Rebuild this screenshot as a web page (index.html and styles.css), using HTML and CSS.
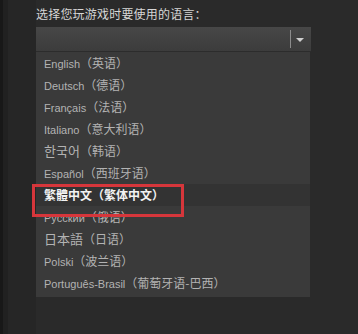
FILE: index.html
```html
<!DOCTYPE html>
<html lang="zh">
<head>
<meta charset="utf-8">
<link rel="stylesheet" href="styles.css">
</head>
<body>
<div class="page">
  <div class="label">选择您玩游戏时要使用的语言：</div>
  <div class="select">
    <div class="select-value"></div>
    <div class="select-divider"></div>
    <div class="select-arrow"></div>
  </div>
  <ul class="list">
    <li class="item">English<span class="cj">（英语）</span></li>
    <li class="item">Deutsch<span class="cj">（德语）</span></li>
    <li class="item">Français<span class="cj">（法语）</span></li>
    <li class="item">Italiano<span class="cj">（意大利语）</span></li>
    <li class="item"><span class="ko">한국어</span><span class="cj">（韩语）</span></li>
    <li class="item">Español<span class="cj">（西班牙语）</span></li>
    <li class="item item-active"><span class="cj">繁體中文（繁体中文）</span></li>
    <li class="item">Русский<span class="cj">（俄语）</span></li>
    <li class="item"><span class="ja">日本語</span><span class="cj">（日语）</span></li>
    <li class="item">Polski<span class="cj">（波兰语）</span></li>
    <li class="item">Português-Brasil<span class="cj">（葡萄牙语-巴西）</span></li>
  </ul>
  <div class="highlight-box"></div>
</div>
</body>
</html>
```
FILE: styles.css
```css
html, body {
  margin: 0;
  padding: 0;
}
body {
  width: 358px;
  height: 334px;
  overflow: hidden;
  background: linear-gradient(to right, #181818 0, #181818 3px, #212121 3px, #212121 8px, #262626 8px, #262626 36px, #2a2a2a 36px);
  font-family: "Liberation Sans", "Noto Sans CJK SC", sans-serif;
}
.page {
  position: relative;
  padding: 5px 0 0 36px;
}
.label {
  font-family: "Noto Sans CJK SC", sans-serif;
  font-size: 12px;
  line-height: 18px;
  color: #d6d6d6;
  letter-spacing: 0.2px;
  margin-bottom: 4px;
  height: 18px;
}
.select {
  width: 275px;
  height: 24px;
  display: flex;
  align-items: center;
  background: linear-gradient(to bottom, #474747, #3c3c3c);
  border-bottom: 1px solid #2c2c2c;
}
.select-value {
  flex: 1;
}
.select-divider {
  width: 1px;
  height: 18px;
  background: #8c8c8c;
}
.select-arrow {
  width: 0;
  height: 0;
  border-left: 4px solid transparent;
  border-right: 4px solid transparent;
  border-top: 4px solid #d0d0d0;
  margin: 1px 7px 0 5px;
}
.list {
  list-style: none;
  margin: 0;
  padding: 0 0 3px 0;
  width: 274px;
  background: #3a3a3a;
}
.item {
  height: 22px;
  line-height: 22px;
  padding-left: 8px;
  font-size: 11px;
  color: #b3b3b3;
  white-space: nowrap;
}
.cj {
  font-family: "Noto Sans CJK SC", sans-serif;
  font-size: 12px;
}
.ko {
  font-family: "Noto Sans CJK KR", sans-serif;
  font-size: 13px;
}
.ja {
  font-family: "Noto Sans CJK JP", sans-serif;
  font-size: 13px;
}
.item-active {
  color: #f2f2f2;
  font-weight: bold;
  background: #333333;
}
.item-active .cj {
  font-weight: bold;
}
.highlight-box {
  position: absolute;
  left: 32px;
  top: 184px;
  width: 146px;
  height: 27px;
  border: 3px solid #d6363b;
}
```
